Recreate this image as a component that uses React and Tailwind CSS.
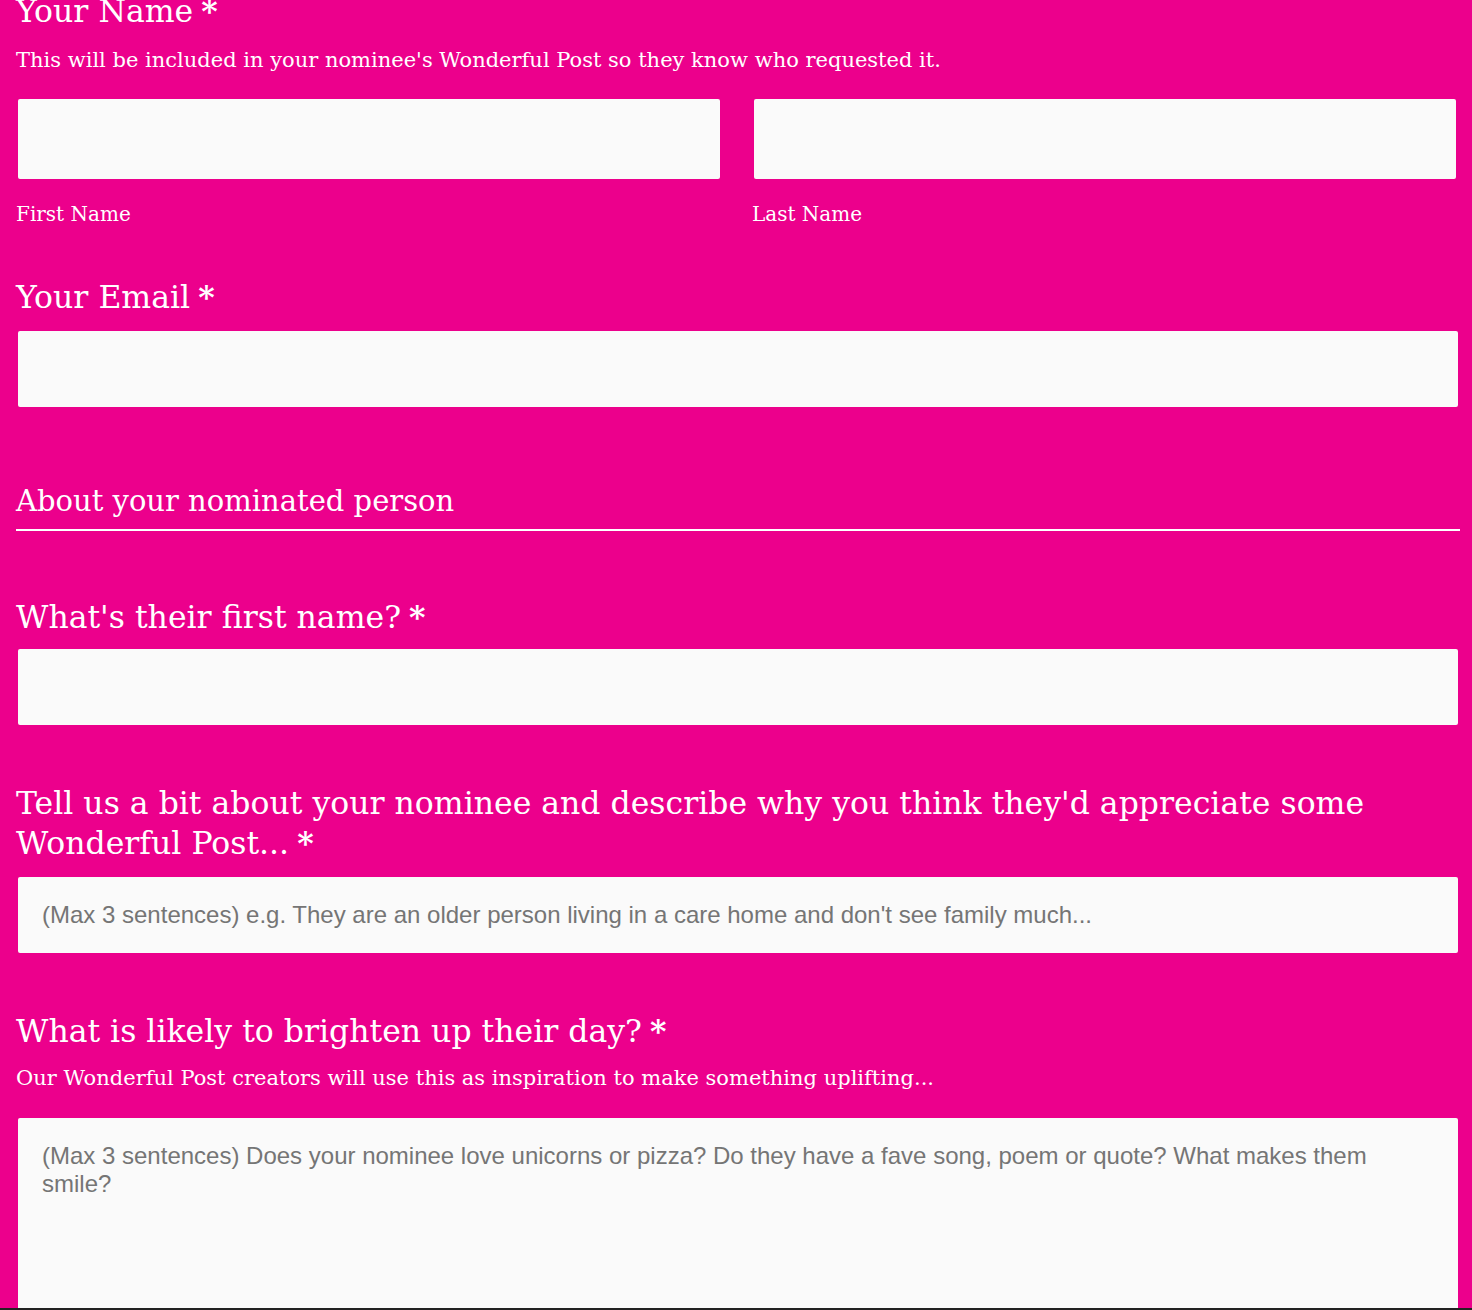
import React from 'react';

const serif = { fontFamily: '"DejaVu Serif", "Liberation Serif", serif' };

const Req = () => <span className="ml-2 font-bold">*</span>;

const inputCls =
  'block w-full bg-[#fafafa] rounded-[2px] border-0 outline-none px-6 text-[24px] text-[#333] placeholder:text-[#757575] font-["Liberation_Sans",Arial,sans-serif]';

const App = () => {
  return (
    <div className="w-[1472px] h-[1310px] overflow-hidden bg-[#ec008c] relative">
      <div className="pl-4 pr-3 -mt-[9px] text-white" style={serif}>
        {/* Your name */}
        <h2 className="text-[31.5px] leading-[40px]">
          Your Name<Req />
        </h2>
        <p className="text-[21px] leading-[28px] mt-[15px]">
          This will be included in your nominee's Wonderful Post so they know who requested it.
        </p>
        <div className="grid grid-cols-2 gap-[34px] mt-[25px] pl-[2px] pr-[4px]">
          <div>
            <input className={`${inputCls} h-[80px]`} />
            <label className="block text-[20px] mt-[20px] -ml-[2px]">First Name</label>
          </div>
          <div>
            <input className={`${inputCls} h-[80px]`} />
            <label className="block text-[20px] mt-[20px] -ml-[2px]">Last Name</label>
          </div>
        </div>

        {/* Your email */}
        <h2 className="text-[31.5px] leading-[40px] mt-[48px]">
          Your Email<Req />
        </h2>
        <div className="pl-[2px] pr-[2px] mt-[14px]">
          <input className={`${inputCls} h-[76px]`} />
        </div>

        {/* Section */}
        <h3 className="text-[29px] leading-[40px] mt-[74px]">About your nominated person</h3>
        <div className="h-[2px] bg-white mt-[8px]" />

        <h2 className="text-[31.5px] leading-[40px] mt-[66px]">
          What's their first name?<Req />
        </h2>
        <div className="pl-[2px] pr-[2px] mt-[12px]">
          <input className={`${inputCls} h-[76px]`} />
        </div>

        <h2 className="text-[31.5px] leading-[40px] mt-[58px]">
          Tell us a bit about your nominee and describe why you think they'd appreciate some Wonderful Post...<Req />
        </h2>
        <div className="pl-[2px] pr-[2px] mt-[14px]">
          <input
            className={`${inputCls} h-[76px]`}
            placeholder="(Max 3 sentences) e.g. They are an older person living in a care home and don't see family much..."
          />
        </div>

        <h2 className="text-[31.5px] leading-[40px] mt-[58px]">
          What is likely to brighten up their day?<Req />
        </h2>
        <p className="text-[21px] leading-[28px] mt-[13px]">
          Our Wonderful Post creators will use this as inspiration to make something uplifting...
        </p>
        <div className="pl-[2px] pr-[2px] mt-[26px]">
          <textarea
            className={`${inputCls} h-[220px] pt-6 pb-5 leading-[28px] resize-y`}
            placeholder="(Max 3 sentences) Does your nominee love unicorns or pizza? Do they have a fave song, poem or quote? What makes them smile?"
          />
        </div>
      </div>
      <div className="absolute left-0 right-0 bottom-0 h-[2px] bg-[#222]" />
    </div>
  );
};

export default App;
